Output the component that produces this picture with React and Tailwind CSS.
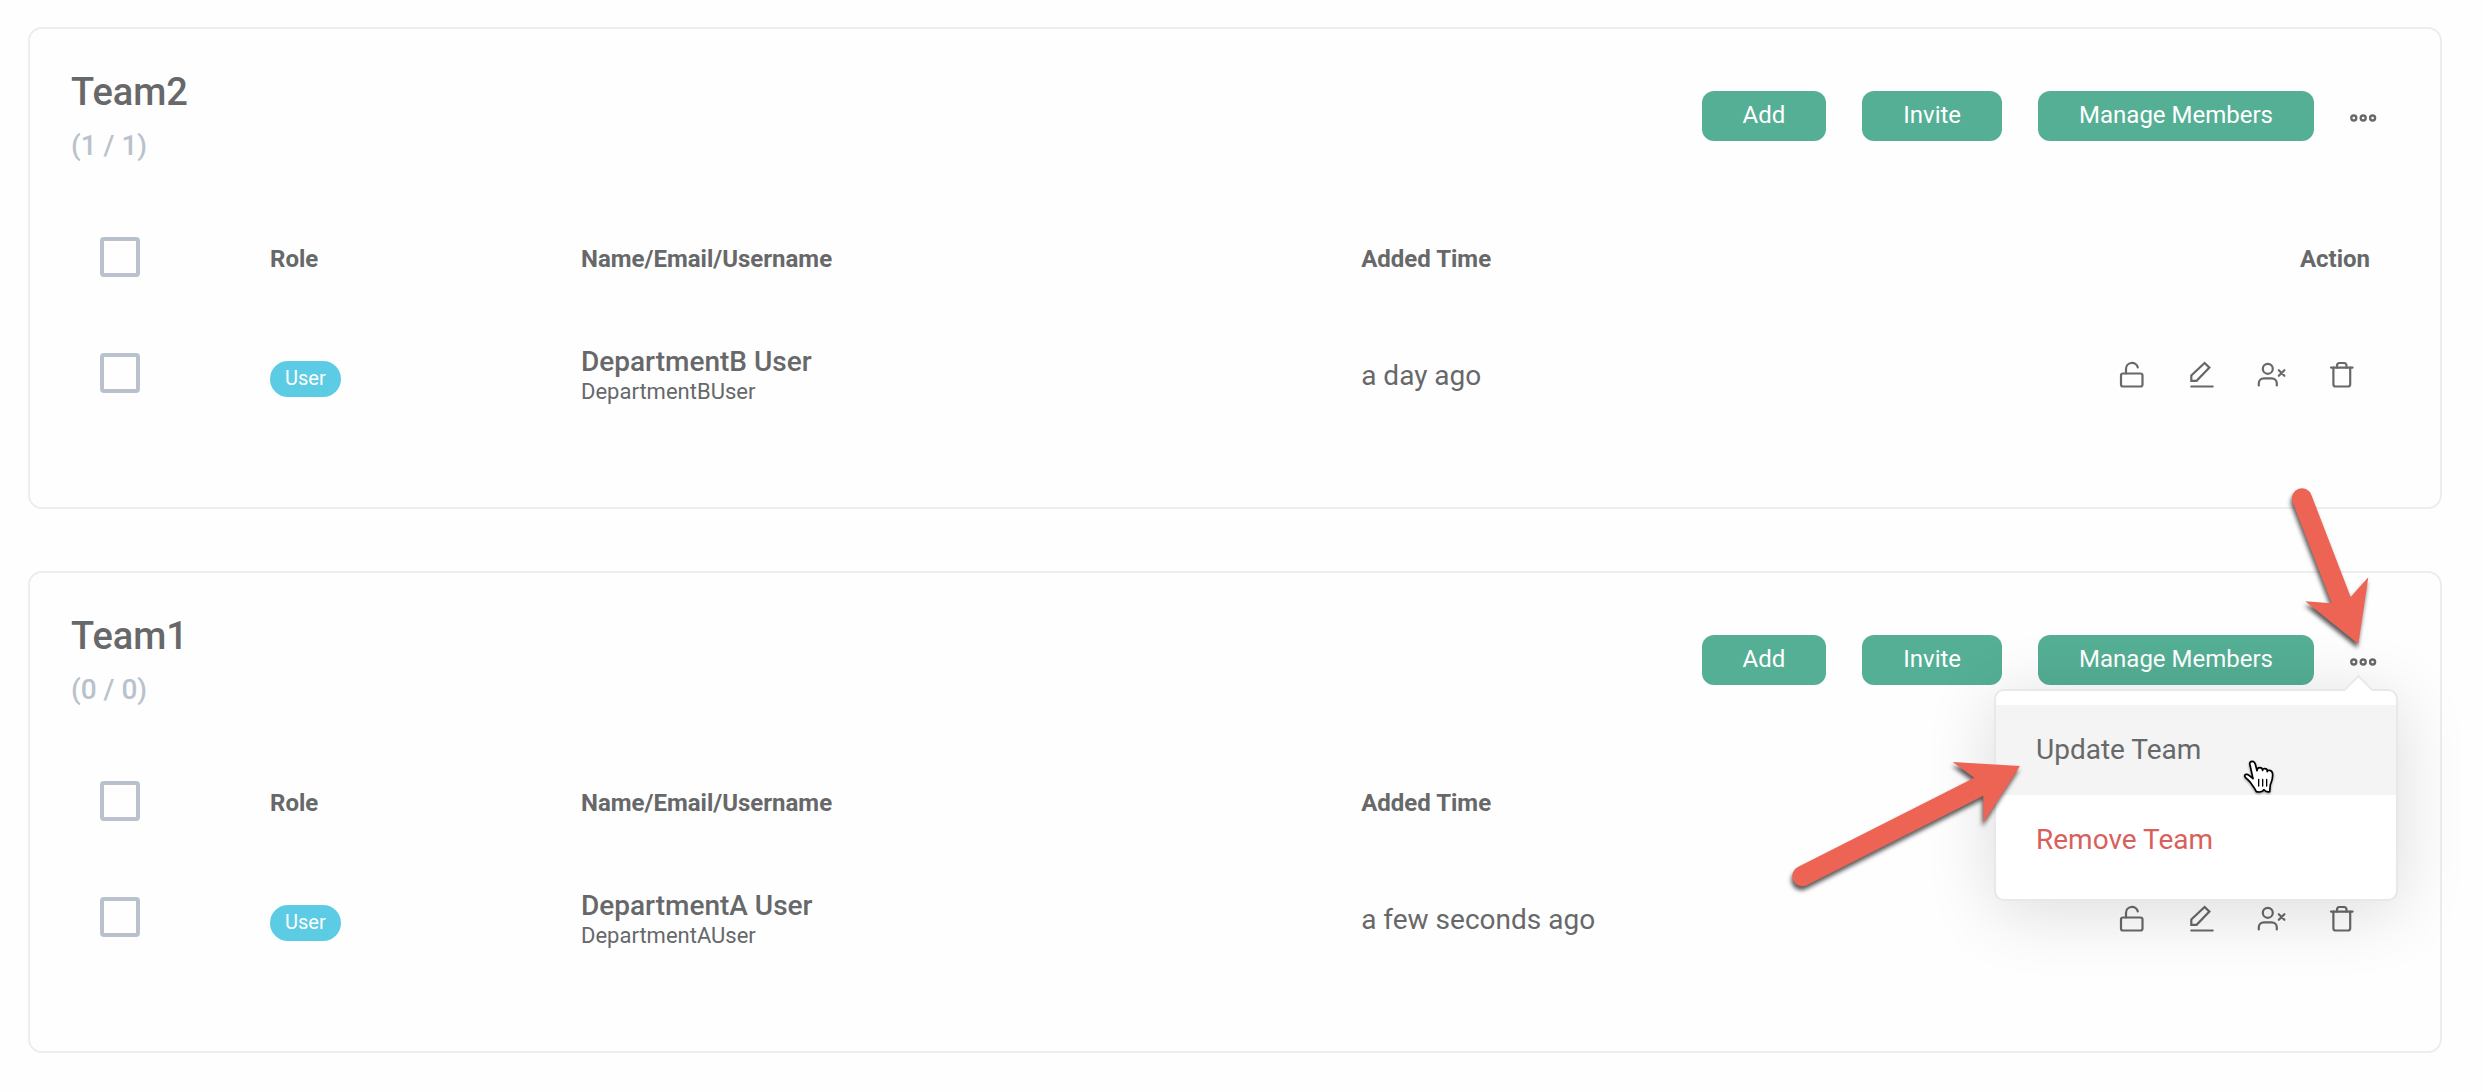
import { useState } from "react";

const teams = [
  {
    id: "team2",
    name: "Team2",
    count: "(1 / 1)",
    members: [{ id: 1, role: "User", name: "DepartmentB User", username: "DepartmentBUser", added: "a day ago" }]
  },
  {
    id: "team1",
    name: "Team1",
    count: "(0 / 0)",
    members: [{ id: 2, role: "User", name: "DepartmentA User", username: "DepartmentAUser", added: "a few seconds ago" }]
  }
];

const icon = {
  width: 32,
  height: 32,
  viewBox: "0 0 32 32",
  fill: "none",
  stroke: "currentColor",
  strokeWidth: 2.2,
  strokeLinecap: "round",
  strokeLinejoin: "round",
  "aria-hidden": true
};

const LockIcon = () => (
  <svg {...icon}>
    <rect x="5" y="14.5" width="21.5" height="13" rx="2" />
    <path d="M10 14.5V10a6 6 0 0 1 11.8-1.6" />
  </svg>
);

const EditIcon = () => (
  <svg {...icon}>
    <path d="M5.3 27.5h21.4" />
    <path d="M5.3 21.8v-5.3L18.6 4l4.8 4.6-12.8 13.2z" strokeLinejoin="miter" />
  </svg>
);

const RemoveUserIcon = () => (
  <svg {...icon}>
    <circle cx="11.8" cy="9.8" r="5" />
    <path d="M2.8 26.5v-2.2a5 5 0 0 1 5-5h8a5 5 0 0 1 5 5v2.2" />
    <path d="M22.8 11.2l5.6 5.6M28.4 11.2l-5.6 5.6" />
  </svg>
);

const TrashIcon = () => (
  <svg {...icon}>
    <path d="M5 8.6h21.6" />
    <path d="M7.4 8.6v16.6a2.3 2.3 0 0 0 2.3 2.3h12.2a2.3 2.3 0 0 0 2.3-2.3V8.6" />
    <path d="M11 8.6V6.4A2.3 2.3 0 0 1 13.3 4h4.9a2.3 2.3 0 0 1 2.3 2.4v2.2" />
  </svg>
);

const DotsIcon = () => (
  <svg width="28" height="10" viewBox="0 0 28 10" fill="none" stroke="currentColor" strokeWidth="2.4" aria-hidden="true">
    <circle cx="3.8" cy="5" r="2.5" />
    <circle cx="13.2" cy="5" r="2.5" />
    <circle cx="22.6" cy="5" r="2.5" />
  </svg>
);

const HandCursor = () => (
  <svg
    width="32"
    height="36"
    viewBox="0 0 96 108"
    className="absolute top-[69px] right-[121px] overflow-visible drop-shadow-[0_1px_1px_rgba(0,0,0,0.45)]"
    stroke="#000"
    strokeWidth="5"
    strokeLinejoin="round"
    strokeLinecap="round"
    aria-hidden="true"
  >
    <path
      fill="#fff"
      d="M21 15C18 7 24 4 28 4c5 0 7 3 9 9l5 19c0-7 4-9 9-9 5 0 7 3 8 8 0-4 3-6 7-5 5 0 7 3 7 9 1-4 3-5 7-4 6 1 9 5 9 14 0 14-4 20-7 29l-2 21c-8 2-12 0-17-6-5 8-14 8-23 6-3-7-9-16-15-24C20 62 5 53 5 48c0-5 7-7 13-2l12 10z"
    />
    <path d="M47 58v20M59 58v20M71 58v20" strokeWidth="4" />
  </svg>
);

const PointerArrows = () => (
  <svg
    width="604"
    height="430"
    viewBox="0 0 604 430"
    fill="#ed6455"
    className="pointer-events-none absolute -top-[212px] -left-[202px] overflow-visible drop-shadow-[-1px_4px_2px_rgba(0,0,0,0.65)]"
    aria-hidden="true"
  >
    <path d="M498.4 22.6A10 10 0 1 1 517.4 16.1L556.7 118l17.6-19.7-10 66.7-53-42.7 26.4 2z" />
    <path d="M4.3 387.7A10 10 0 1 0 12.7 406.3L189.3 316.7v27L226 287l-67.3-4 21.6 15.7z" />
  </svg>
);

function Checkbox({ label }) {
  return (
    <input
      type="checkbox"
      aria-label={label}
      className="block size-10 mb-1 appearance-none rounded-sm border-4 border-[#b9c2cc] checked:bg-[#b9c2cc]"
    />
  );
}

function PrimaryButton({ children }) {
  return (
    <button className="h-[50px] px-[41px] pb-0.5 rounded-xl bg-[#54af95] text-white text-2xl whitespace-nowrap cursor-pointer">
      {children}
    </button>
  );
}

function TeamMenu() {
  return (
    <div className="absolute top-[54px] right-[-20px] z-10 w-[404px] rounded-[10px] border-2 border-[#e8e8e8] bg-white py-[14px] shadow-[0_10px_70px_rgba(0,0,0,0.14)]">
      <span className="absolute -top-[12px] right-[27px] size-[21px] rotate-45 border-t-2 border-l-2 border-[#e8e8e8] bg-white" />
      <button className="relative block h-[90px] w-full bg-[#f4f4f4] px-10 text-left text-[28px] cursor-pointer">
        Update Team
      </button>
      <button className="relative block h-[90px] w-full px-10 text-left text-[28px] text-[#d95f5d] cursor-pointer">
        Remove Team
      </button>
      <HandCursor />
      <PointerArrows />
    </div>
  );
}

function TeamCard({ team, open, onToggle }) {
  return (
    <section className="rounded-[14px] border-2 border-[#ededed] pb-[74px]">
      {/* HEADER */}
      <div className="flex items-start justify-between pt-10 pl-[41px] pr-[62px]">
        <div>
          <h2 className="text-[38px] leading-[46px] font-medium">{team.name}</h2>
          <p className="mt-3 text-[28px] leading-[38px] font-medium text-[#b9c2cc]">{team.count}</p>
        </div>
        <div className="mt-[22px] flex items-center gap-9">
          <PrimaryButton>Add</PrimaryButton>
          <PrimaryButton>Invite</PrimaryButton>
          <PrimaryButton>Manage Members</PrimaryButton>
          <div className="relative">
            <button
              aria-label={`${team.name} options`}
              aria-expanded={open}
              onClick={onToggle}
              className="flex h-[50px] items-center pt-1 cursor-pointer"
            >
              <DotsIcon />
            </button>
            {open && <TeamMenu />}
          </div>
        </div>
      </div>

      {/* MEMBERS */}
      <div className="pt-9 px-[44px]">
        <table className="w-full table-fixed text-left">
          <thead>
            <tr className="h-[116px] text-2xl">
              <th className="w-[170px] px-[26px]"><Checkbox label={`Select all in ${team.name}`} /></th>
              <th className="w-[311px] px-[26px]">Role</th>
              <th className="w-[33.6%] px-[26px]">Name/Email/Username</th>
              <th className="px-[26px]">Added Time</th>
              <th className="px-[26px] text-right">Action</th>
            </tr>
          </thead>
          <tbody>
            {team.members.map((m) => (
              <tr key={m.id} className="h-[116px]">
                <td className="px-[26px]"><Checkbox label={`Select ${m.name}`} /></td>
                <td className="px-[26px]">
                  <span className="mt-2 flex h-9 w-fit items-center rounded-full bg-[#5ccbe4] px-[15px] pb-0.5 text-xl text-white">
                    {m.role}
                  </span>
                </td>
                <td className="px-[26px] pt-0.5">
                  <div className="text-[28px] leading-8 font-medium">{m.name}</div>
                  <div className="text-[22px] leading-7">{m.username}</div>
                </td>
                <td className="px-[26px] pt-0.5 text-[28px]">{m.added}</td>
                <td className="pl-[26px] pr-[38px]">
                  <div className="flex justify-end gap-[38px]">
                    <button aria-label="Unlock" className="cursor-pointer"><LockIcon /></button>
                    <button aria-label="Edit" className="cursor-pointer"><EditIcon /></button>
                    <button aria-label="Remove from team" className="cursor-pointer"><RemoveUserIcon /></button>
                    <button aria-label="Delete" className="cursor-pointer"><TrashIcon /></button>
                  </div>
                </td>
              </tr>
            ))}
          </tbody>
        </table>
      </div>
    </section>
  );
}

function App() {
  const [openMenu, setOpenMenu] = useState("team1");

  return (
    <main className="min-h-screen bg-[#fefefe] flex flex-col gap-[62px] pt-[27px] pb-[39px] pl-7 pr-10 font-['Roboto',sans-serif] text-[#67686a] antialiased">
      {teams.map((team) => (
        <TeamCard
          key={team.id}
          team={team}
          open={openMenu === team.id}
          onToggle={() => setOpenMenu(openMenu === team.id ? null : team.id)}
        />
      ))}
    </main>
  );
}

export default App;
